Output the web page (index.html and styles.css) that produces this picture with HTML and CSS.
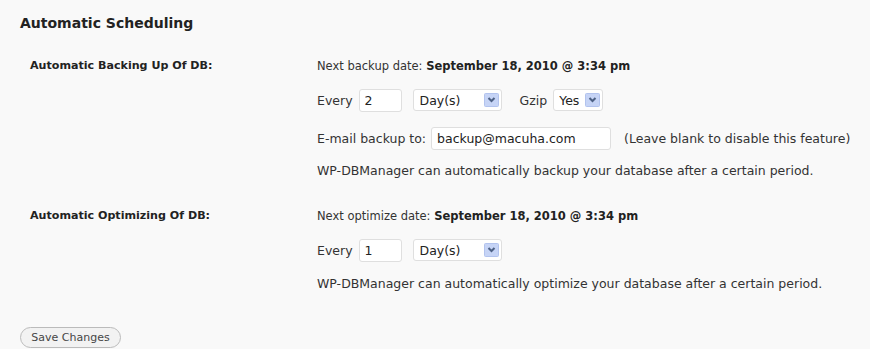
FILE: index.html
```html
<!DOCTYPE html>
<html lang="en">
<head>
  <meta charset="UTF-8">
  <title>Automatic Scheduling</title>
  <link rel="stylesheet" href="styles.css">
</head>
<body>
  <div class="wrap">
    <h3>Automatic Scheduling</h3>

    <div class="setting">
      <div class="label">Automatic Backing Up Of DB:</div>
      <div class="fields">
        <p class="next">Next backup date: <strong>September 18, 2010 @ 3:34 pm</strong></p>
        <div class="line">
          <span>Every</span>
          <input class="num" type="text" value="2">
          <span class="select sel-period">
            <select><option>Day(s)</option></select>
            <svg class="arrow" width="15" height="14" viewBox="0 0 15 14"><rect x="0.5" y="0.5" width="14" height="13" rx="1" fill="#c6d4f6" stroke="#b2c3ee"/><path d="M4.5 5 L7.5 8 L10.5 5" fill="none" stroke="#4d6185" stroke-width="2"/></svg>
          </span>
          <span class="gzip">Gzip</span>
          <span class="select sel-yes">
            <select><option>Yes</option></select>
            <svg class="arrow" width="15" height="14" viewBox="0 0 15 14"><rect x="0.5" y="0.5" width="14" height="13" rx="1" fill="#c6d4f6" stroke="#b2c3ee"/><path d="M4.5 5 L7.5 8 L10.5 5" fill="none" stroke="#4d6185" stroke-width="2"/></svg>
          </span>
        </div>
        <div class="line line-email">
          <span>E-mail backup to:</span>
          <input class="email" type="text" value="backup@macuha.com">
          <span class="hint">(Leave blank to disable this feature)</span>
        </div>
        <p class="desc">WP-DBManager can automatically backup your database after a certain period.</p>
      </div>
    </div>

    <div class="setting">
      <div class="label">Automatic Optimizing Of DB:</div>
      <div class="fields">
        <p class="next">Next optimize date: <strong>September 18, 2010 @ 3:34 pm</strong></p>
        <div class="line">
          <span>Every</span>
          <input class="num" type="text" value="1">
          <span class="select sel-period">
            <select><option>Day(s)</option></select>
            <svg class="arrow" width="15" height="14" viewBox="0 0 15 14"><rect x="0.5" y="0.5" width="14" height="13" rx="1" fill="#c6d4f6" stroke="#b2c3ee"/><path d="M4.5 5 L7.5 8 L10.5 5" fill="none" stroke="#4d6185" stroke-width="2"/></svg>
          </span>
        </div>
        <p class="desc">WP-DBManager can automatically optimize your database after a certain period.</p>
      </div>
    </div>

    <div class="submit">
      <button type="button" class="button">Save Changes</button>
    </div>
  </div>
</body>
</html>
```

FILE: styles.css
```css
body {
  margin: 0;
  background: #f9f9f9;
  color: #333;
  font-family: "DejaVu Sans", Verdana, sans-serif;
  font-size: 12.5px;
}

.wrap {
  padding: 0 20px;
}

h3 {
  margin: 0;
  padding: 13px 0 0;
  font-size: 14px;
  line-height: 20px;
  color: #222;
}

.setting {
  display: grid;
  grid-template-columns: 287px 1fr;
  padding-left: 10px;
}

.setting:first-of-type {
  margin-top: 24px;
}

.setting + .setting {
  margin-top: 28px;
}

.label {
  font-size: 11.1px;
  font-weight: bold;
  color: #222;
  line-height: 14px;
  padding-top: 2px;
}

.fields {
  display: flex;
  flex-direction: column;
  white-space: nowrap;
}

.next {
  margin: 0;
  font-size: 11.5px;
  line-height: 14px;
  padding-top: 2px;
  color: #333;
}

.next strong {
  color: #222;
}

.line {
  display: flex;
  align-items: center;
  margin-top: 15px;
  height: 24px;
}

.line > * {
  flex-shrink: 0;
}

.line-email {
  height: 22px;
}

input {
  box-sizing: border-box;
  height: 23px;
  border: 1px solid #dfdfdf;
  border-radius: 3px;
  background: #fff;
  padding: 0 5px;
  font-family: "DejaVu Sans", Verdana, sans-serif;
  font-size: 12.5px;
  color: #222;
}

.num {
  width: 43px;
  margin: 0 11px 0 6px;
}

.email {
  width: 180px;
  margin: 0 13px 0 5px;
}

.select {
  position: relative;
  display: inline-block;
  height: 22px;
}

.select select {
  appearance: none;
  -webkit-appearance: none;
  box-sizing: border-box;
  height: 22px;
  border: 1px solid #dfdfdf;
  border-radius: 3px;
  background: #fff;
  padding: 0 0 0 6px;
  font-family: "DejaVu Sans", Verdana, sans-serif;
  font-size: 12.5px;
  color: #222;
}

.sel-period select {
  width: 89px;
}

.sel-yes select {
  width: 50px;
  padding-left: 5px;
}

.arrow {
  position: absolute;
  right: 3px;
  top: 4px;
  pointer-events: none;
}

.gzip {
  margin: 0 6px 0 18px;
}

.desc {
  margin: 14px 0 0;
  line-height: 16px;
}

.submit {
  margin-top: 35px;
}

.button {
  font-family: "DejaVu Sans", Verdana, sans-serif;
  font-size: 11px;
  color: #464646;
  background: #f2f2f2;
  border: 1px solid #bbb;
  border-radius: 11px;
  height: 21px;
  width: 101px;
  padding: 0;
}
```
